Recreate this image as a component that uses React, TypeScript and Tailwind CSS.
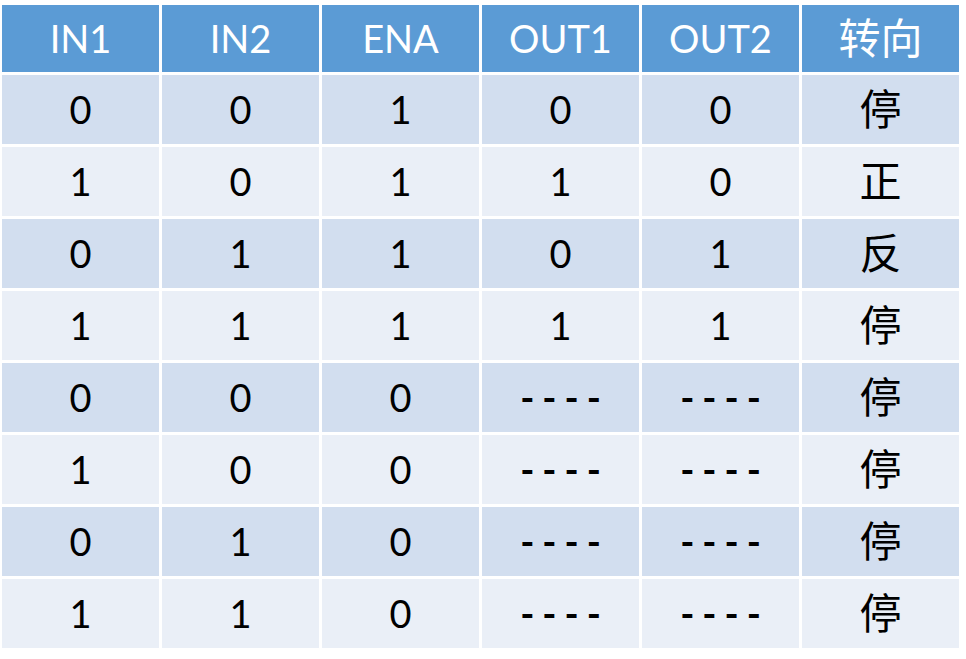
const header = ['IN1', 'IN2', 'ENA', 'OUT1', 'OUT2', '转向'];

const rows = [
  ['0', '0', '1', '0', '0', '停'],
  ['1', '0', '1', '1', '0', '正'],
  ['0', '1', '1', '0', '1', '反'],
  ['1', '1', '1', '1', '1', '停'],
  ['0', '0', '0', '----', '----', '停'],
  ['1', '0', '0', '----', '----', '停'],
  ['0', '1', '0', '----', '----', '停'],
  ['1', '1', '0', '----', '----', '停'],
];

export default function App() {
  return (
    <div
      className="w-[966px] h-[659px] bg-white pl-[2px] pt-[5px]"
      style={{ fontFamily: 'Lato, "Noto Sans CJK SC", sans-serif' }}
    >
      <div className="grid grid-cols-[repeat(6,157px)] grid-rows-[67px_repeat(8,69px)] gap-[3px] w-[959px]">
        {header.map((h, j) => (
          <div
            key={h}
            className={`bg-[#5b9bd5] text-white ${j === 5 ? 'text-[42px]' : 'text-[38px]'} font-normal flex items-center justify-center`}
          >
            {h}
          </div>
        ))}
        {rows.map((r, i) =>
          r.map((c, j) => (
            <div
              key={`${i}-${j}`}
              className={`${i % 2 === 0 ? 'bg-[#d2deef]' : 'bg-[#eaeff7]'} text-black ${j === 5 ? 'text-[42px]' : 'text-[38px]'} ${c === '----' ? 'font-bold tracking-[8px] pl-[8px]' : 'font-normal'} flex items-center justify-center`}
            >
              {c}
            </div>
          ))
        )}
      </div>
    </div>
  );
}
